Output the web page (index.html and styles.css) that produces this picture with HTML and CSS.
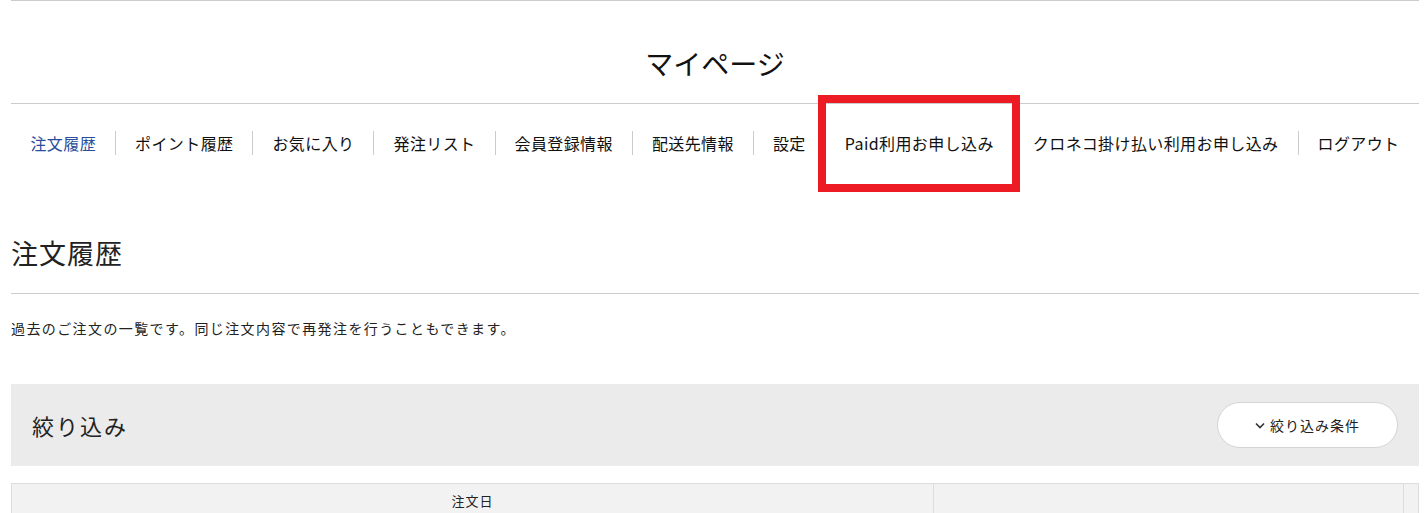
FILE: index.html
```html
<!DOCTYPE html>
<html lang="ja">
<head>
    <meta charset="UTF-8">
    <meta name="viewport" content="width=device-width, initial-scale=1.0">
    <title>マイページ</title>
    <link rel="stylesheet" href="styles.css">
</head>
<body>

    <div class="page">
        <h1 class="page-title">マイページ</h1>

        <ul class="mypage-nav">
            <li class="active"><a href="#">注文履歴</a></li>
            <li><a href="#">ポイント履歴</a></li>
            <li><a href="#">お気に入り</a></li>
            <li><a href="#">発注リスト</a></li>
            <li><a href="#">会員登録情報</a></li>
            <li><a href="#">配送先情報</a></li>
            <li><a href="#">設定</a></li>
            <li class="marked"><a href="#">Paid利用お申し込み</a><span class="highlight"></span></li>
            <li><a href="#">クロネコ掛け払い利用お申し込み</a></li>
            <li><a href="#">ログアウト</a></li>
        </ul>

        <h2 class="section-title">注文履歴</h2>
        <p class="lead">過去のご注文の一覧です。同じ注文内容で再発注を行うこともできます。</p>

        <div class="filter">
            <h3 class="filter-title">絞り込み</h3>
            <button class="filter-btn">
                <svg width="10" height="7" viewBox="0 0 10 7"><polyline points="1,1.5 5,5.5 9,1.5" fill="none" stroke="#333" stroke-width="1.6"/></svg>
                絞り込み条件
            </button>
        </div>

        <div class="order-table">
            <div class="th">注文日</div>
            <div class="th"></div>
            <div class="th"></div>
        </div>
    </div>

</body>
</html>
```

FILE: styles.css
```css
body {
    font-family: "Noto Sans CJK JP", "Noto Sans", sans-serif;
    color: #222;
    margin: 0;
}
.page {
    margin: 0 6px 0 11px;
    border-top: 1px solid #ccc;
}
.page-title {
    margin: 0;
    padding: 40px 0 18px;
    font-size: 28px;
    font-weight: normal;
    line-height: 44px;
    text-align: center;
    color: #111;
    border-bottom: 1px solid #ccc;
}
.mypage-nav {
    list-style: none;
    margin: 0;
    padding: 27px 0 0;
    display: flex;
    justify-content: center;
}
.mypage-nav li {
    position: relative;
    flex-shrink: 0;
    white-space: nowrap;
    padding: 0 19px;
    line-height: 24px;
    font-size: 16px;
    letter-spacing: 0.4px;
    border-left: 1px solid #ccc;
}
.mypage-nav li:first-child {
    border-left: none;
}
.mypage-nav a {
    color: #111;
    text-decoration: none;
}
.mypage-nav li.active a {
    color: #2a4d9c;
}
.highlight {
    position: absolute;
    z-index: 1;
    top: -36px;
    bottom: -37px;
    left: -8px;
    right: -7px;
    border: 8px solid #ed1c24;
}
.section-title {
    margin: 78px 0 0;
    padding-bottom: 20px;
    font-size: 27px;
    font-weight: normal;
    letter-spacing: 1px;
    line-height: 40px;
    color: #222;
    border-bottom: 1px solid #ccc;
}
.lead {
    margin: 24px 0 0;
    font-size: 14px;
    letter-spacing: 1.4px;
    line-height: 20px;
}
.filter {
    margin-top: 46px;
    height: 82px;
    padding: 0 21px 0 21px;
    background-color: #ebebeb;
    display: flex;
    align-items: center;
    justify-content: space-between;
}
.filter-title {
    margin: 0;
    font-size: 22px;
    font-weight: normal;
    letter-spacing: 2px;
}
.filter-btn {
    width: 181px;
    height: 46px;
    border: 1px solid #d4d4d4;
    border-radius: 23px;
    background: #fff;
    font-family: inherit;
    font-size: 14px;
    letter-spacing: 1px;
    color: #222;
    display: flex;
    align-items: center;
    justify-content: center;
    gap: 5px;
}
.order-table {
    margin-top: 17px;
    display: grid;
    grid-template-columns: 922px 1fr 15px;
    border-top: 1px solid #ddd;
    border-left: 1px solid #ddd;
}
.th {
    height: 34px;
    line-height: 34px;
    text-align: center;
    font-size: 13px;
    letter-spacing: 1px;
    background-color: #f2f2f2;
    border-right: 1px solid #ddd;
    border-bottom: 1px solid #ddd;
}
```
